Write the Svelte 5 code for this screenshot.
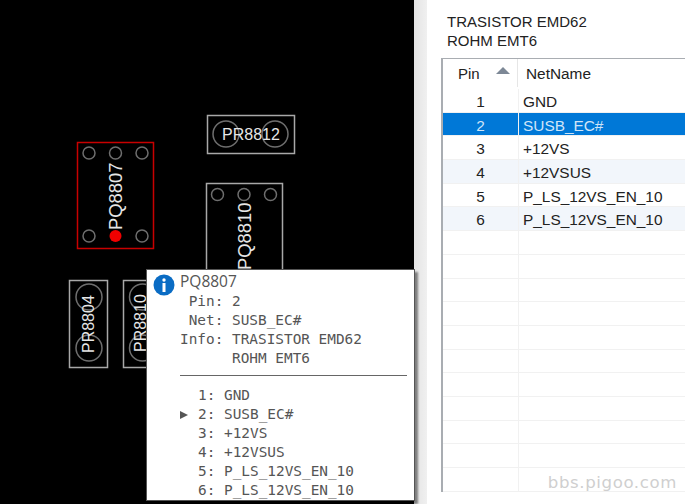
<script lang="ts">
  const parts = [
    { x: 207.5, y: 115.5, w: 87, h: 38, label: "PR8812", lx: 222, ly: 140, size: 16, vertical: false },
    { x: 206.5, y: 183.5, w: 76, h: 100, label: "PQ8810", lx: 251, ly: 270, size: 18.4, vertical: true },
    { x: 69.5, y: 280.5, w: 38, h: 87, label: "PR8804", lx: 94, ly: 353, size: 16, vertical: true },
    { x: 123.5, y: 280.5, w: 38, h: 87, label: "PR8810", lx: 146, ly: 352, size: 16, vertical: true },
  ];
  const holes = [
    [226, 134, 13], [275, 134, 13],
    [217.5, 194.5, 6], [244, 194.5, 6], [270.5, 194.5, 6],
    [89, 297, 13], [89, 348, 13], [142.5, 297, 13], [142.5, 348, 13],
    [89, 153, 6], [115.5, 153, 6], [142, 153, 6], [89, 236, 6], [142, 236, 6],
  ];

  const pins = [
    { pin: 1, net: "GND" },
    { pin: 2, net: "SUSB_EC#" },
    { pin: 3, net: "+12VS" },
    { pin: 4, net: "+12VSUS" },
    { pin: 5, net: "P_LS_12VS_EN_10" },
    { pin: 6, net: "P_LS_12VS_EN_10" },
  ];
  const rows = Array.from({ length: 17 }, (_, i) => pins[i] ?? null);
  const selectedPin = 2;
</script>

<div class="window">
  <div class="board">
    <svg width="414" height="504" viewBox="0 0 414 504">
      {#each holes as [cx, cy, r]}
        <circle {cx} {cy} {r} fill="none" stroke="#6e6e6e" stroke-width="1.5" />
      {/each}
      {#each parts as p}
        <rect x={p.x} y={p.y} width={p.w} height={p.h} fill="none" stroke="#a8a8a8" stroke-width="1.5" />
        <text
          x={p.lx}
          y={p.ly}
          font-size={p.size}
          class="refdes"
          transform={p.vertical ? `rotate(-90 ${p.lx} ${p.ly})` : undefined}>{p.label}</text>
      {/each}
      <rect x="77.5" y="142.5" width="76" height="106" fill="none" stroke="#c80000" stroke-width="1.5" />
      <circle cx="115.5" cy="236" r="6" fill="#f00000" />
      <text x="122" y="230" font-size="18.4" class="refdes" transform="rotate(-90 122 230)">PQ8807</text>
    </svg>

    <div class="tooltip">
      <svg class="info" width="22" height="22" viewBox="0 0 22 22">
        <circle cx="11" cy="11" r="10.5" fill="#0a6cc4" />
        <circle cx="11" cy="6" r="1.7" fill="#fff" />
        <rect x="9.5" y="9" width="3" height="9" fill="#fff" />
      </svg>
      <div class="tip-title">PQ8807</div>
      <pre class="tip-text"> Pin: 2
 Net: SUSB_EC#
Info: TRASISTOR EMD62
      ROHM EMT6</pre>
      <div class="tip-rule"></div>
      <div class="tip-pins">
        {#each pins as p}
          <div class="tip-pin">
            <span class="marker">{#if p.pin === selectedPin}<i></i>{/if}</span>
            <span>{p.pin}: {p.net}</span>
          </div>
        {/each}
      </div>
    </div>
  </div>

  <div class="strip"></div>

  <div class="panel">
    <div class="part-info">
      <div>TRASISTOR EMD62</div>
      <div>ROHM EMT6</div>
    </div>

    <div class="table">
      <div class="head">
        <div class="head-pin">Pin<span class="sort"></span></div>
        <div class="head-net">NetName</div>
      </div>
      {#each rows as row, i}
        <div class="row" class:stripe={i === 3 || i === 5} class:selected={row?.pin === selectedPin}>
          <div class="cell-pin">{row?.pin ?? ""}</div>
          <div class="cell-net">{row?.net ?? ""}</div>
        </div>
      {/each}
    </div>
    <div class="watermark">bbs.pigoo.com</div>
  </div>
</div>

<style>
  :global(body) {
    margin: 0;
    background: #fff;
  }

  .window {
    width: 685px;
    height: 504px;
    display: flex;
    overflow: hidden;
    position: relative;
  }

  .board {
    width: 414px;
    flex-shrink: 0;
    background: #000;
    position: relative;
  }

  .board svg {
    display: block;
  }

  .refdes {
    font-family: "Liberation Sans", Arial, sans-serif;
    fill: #e6e6e6;
  }

  .tooltip {
    position: absolute;
    left: 146px;
    top: 269px;
    width: 269px;
    height: 232px;
    box-sizing: border-box;
    padding: 2px 7px 0 33px;
    background: #fff;
    border: 1px solid #555;
    box-shadow: 3px 3px 2px rgba(0, 0, 0, 0.45);
    color: #555;
    font-family: "DejaVu Sans Mono", monospace;
    font-size: 14.4px;
    line-height: 18.85px;
  }

  .tooltip .info {
    position: absolute;
    left: 6px;
    top: 4px;
  }

  .tip-title {
    font-family: "Open Sans", sans-serif;
    font-size: 15.5px;
    line-height: 18px;
    color: #555;
  }

  .tip-text {
    margin: 0;
    padding-top: 2px;
    font: inherit;
  }

  .tip-rule {
    height: 1px;
    background: #666;
    margin: 8px 0 10px;
  }

  .tip-pin {
    display: flex;
    white-space: pre;
  }

  .marker {
    width: 18px;
    display: flex;
    align-items: center;
  }

  .marker i {
    width: 0;
    height: 0;
    border-left: 8px solid #555;
    border-top: 4px solid transparent;
    border-bottom: 4px solid transparent;
  }

  .strip {
    width: 13px;
    flex-shrink: 0;
    background: linear-gradient(90deg, #e4e4e4, #f0f0f0);
  }

  .panel {
    flex: 1;
    min-width: 0;
    padding-left: 14px;
    position: relative;
    font-family: "Liberation Sans", Arial, sans-serif;
    font-size: 15.4px;
    color: #222;
  }

  .part-info {
    padding: 12px 0 0 6px;
    font-size: 15px;
    line-height: 19px;
    height: 46px;
  }

  .table {
    width: 300px;
    border-left: 2px solid #a9adb2;
    border-top: 1px solid #a9adb2;
  }

  .head {
    display: flex;
    height: 30px;
    background: #fff;
  }

  .head-pin {
    width: 75px;
    padding-left: 15px;
    box-sizing: border-box;
    line-height: 29px;
    border-right: 1px solid #e6e6e6;
    margin-bottom: 2px;
    position: relative;
    font-size: 15px;
  }

  .sort {
    position: absolute;
    left: 53px;
    top: 8px;
    width: 0;
    height: 0;
    border-left: 7px solid transparent;
    border-right: 7px solid transparent;
    border-bottom: 7px solid #7d8896;
  }

  .head-net {
    padding-left: 8px;
    line-height: 29px;
  }

  .row {
    display: flex;
    height: 23.7px;
    box-sizing: border-box;
    border-bottom: 1px solid #f1f1f1;
    line-height: 26px;
  }

  .row.stripe {
    background: #f2f6fb;
  }

  .row.selected {
    background: #0078d7;
    color: #cfe4f7;
  }

  .cell-pin {
    width: 76px;
    flex-shrink: 0;
    box-sizing: border-box;
    text-align: center;
    border-right: 1px solid #f1f1f1;
  }

  .cell-net {
    padding-left: 4px;
  }

  .watermark {
    position: absolute;
    right: 8px;
    bottom: 12px;
    font-family: "DejaVu Sans", sans-serif;
    font-size: 16.6px;
    letter-spacing: 0.6px;
    color: #cfcfcf;
  }
</style>
